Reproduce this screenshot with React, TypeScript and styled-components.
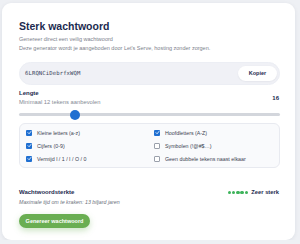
import React from "react";
import styled, { createGlobalStyle } from "styled-components";

const GlobalStyle = createGlobalStyle`
  html, body { margin: 0; padding: 0; }
  body {
    background: #eef0f4;
    font-family: "Liberation Sans", Arial, sans-serif;
    -webkit-font-smoothing: antialiased;
  }
`;

const Card = styled.div`
  box-sizing: border-box;
  margin: 3px 0 0 2px;
  width: 293px;
  height: 237px;
  padding: 17px 15px 12px 17px;
  background: #ffffff;
  border-radius: 9px;
  box-shadow: 0 1px 4px rgba(30, 40, 70, 0.08);
  display: flex;
  flex-direction: column;
`;

const Title = styled.h1`
  margin: 0;
  font-size: 10.5px;
  line-height: 13px;
  font-weight: 700;
  color: #1c2b4f;
`;

const Sub = styled.p`
  margin: 1.5px 0 0;
  font-size: 5.5px;
  line-height: 9px;
  color: #7c818c;
`;

const PasswordBox = styled.div`
  margin-top: 9px;
  height: 24px;
  box-sizing: border-box;
  border-radius: 12px;
  background: #f0f1f6;
  border: 1px solid #eceef4;
  display: flex;
  align-items: center;
  justify-content: space-between;
  padding: 0 2px 0 5px;
`;

const PasswordText = styled.span`
  font-family: "DejaVu Sans Mono", "Liberation Mono", monospace;
  font-size: 5.6px;
  color: #3a4560;
  letter-spacing: 0.1px;
`;

const CopyButton = styled.button`
  height: 15px;
  width: 39px;
  padding: 0;
  border: none;
  border-radius: 8px;
  background: #ffffff;
  box-shadow: 0 0.5px 1.5px rgba(30, 40, 70, 0.08);
  font-family: inherit;
  font-size: 5.5px;
  font-weight: 700;
  color: #1c2b4f;
`;

const LengthHeader = styled.div`
  margin-top: 4px;
  display: flex;
  align-items: center;
  justify-content: space-between;
`;

const Label = styled.div`
  font-size: 6px;
  line-height: 8px;
  font-weight: 700;
  color: #1c2b4f;
`;

const Hint = styled.div<{ $italic?: boolean }>`
  font-size: ${(p) => (p.$italic ? "5.3px" : "5.8px")};
  line-height: ${(p) => (p.$italic ? "9px" : "10px")};
  font-style: ${(p) => (p.$italic ? "italic" : "normal")};
  color: ${(p) => (p.$italic ? "#6d727d" : "#868b95")};
  margin-top: ${(p) => (p.$italic ? "1.5px" : "0")};
`;

const Value = styled.div`
  font-size: 6px;
  font-weight: 700;
  color: #1c2b4f;
  padding-right: 1px;
`;

const SliderWrap = styled.div`
  position: relative;
  margin-top: 3px;
  height: 10px;
  display: flex;
  align-items: center;
`;

const Track = styled.div`
  width: 100%;
  height: 3.5px;
  border-radius: 2px;
  background: #d3d6dc;
`;

const Thumb = styled.div`
  position: absolute;
  top: 0;
  width: 10px;
  height: 10px;
  border-radius: 50%;
  background: #1f6fd1;
`;

const Options = styled.div`
  margin-top: 4px;
  box-sizing: border-box;
  border: 1px solid #e8eaf0;
  background: #f9fafc;
  border-radius: 6px;
  padding: 2px 6px;
  display: grid;
  grid-template-columns: 128px 1fr;
  grid-auto-rows: 13px;
`;

const Option = styled.label`
  display: flex;
  align-items: center;
  gap: 5px;
  font-size: 5.3px;
  color: #3b4252;
`;

const Box = styled.span<{ $checked: boolean }>`
  box-sizing: border-box;
  width: 6px;
  height: 6px;
  border-radius: 1px;
  flex: none;
  display: flex;
  align-items: center;
  justify-content: center;
  background: ${(p) => (p.$checked ? "#1f6fd1" : "#ffffff")};
  border: ${(p) => (p.$checked ? "none" : "0.8px solid #9aa0ab")};
`;

const StrengthRow = styled.div`
  margin-top: 20px;
  display: flex;
  justify-content: space-between;
  align-items: flex-start;
`;

const Meter = styled.div`
  display: flex;
  align-items: center;
  height: 8px;
  gap: 3px;
`;

const Dots = styled.div`
  display: flex;
  gap: 0.8px;
`;

const Dot = styled.span`
  width: 3.5px;
  height: 3.5px;
  border-radius: 50%;
  background: #3db35a;
`;

const StrengthText = styled.span`
  font-size: 5.8px;
  font-weight: 700;
  color: #1c2b4f;
  padding-right: 1px;
`;

const GenerateButton = styled.button`
  margin-top: 7px;
  align-self: flex-start;
  height: 14.5px;
  width: 71px;
  padding: 0;
  border: none;
  border-radius: 8px;
  background: #6aae52;
  box-shadow: 0 2.5px 6px rgba(106, 174, 82, 0.35);
  font-family: inherit;
  font-size: 5.5px;
  font-weight: 700;
  color: #ffffff;
`;

const options = [
  { label: "Kleine letters (a-z)", checked: true },
  { label: "Hoofdletters (A-Z)", checked: true },
  { label: "Cijfers (0-9)", checked: true },
  { label: "Symbolen (!@#$…)", checked: false },
  { label: "Vermijd l / 1 / I / O / 0", checked: true },
  { label: "Geen dubbele tekens naast elkaar", checked: false },
];

const Check = () => (
  <svg width="5" height="5" viewBox="0 0 10 10">
    <path d="M2 5.3 L4.2 7.5 L8 2.8" fill="none" stroke="#fff" strokeWidth="1.6" strokeLinecap="round" strokeLinejoin="round" />
  </svg>
);

export default function App() {
  const min = 4;
  const max = 60;
  const value = 16;
  const trackWidth = 261;
  const thumbLeft = ((value - min) / (max - min)) * trackWidth - 5;

  return (
    <>
      <GlobalStyle />
      <Card>
        <Title>Sterk wachtwoord</Title>
        <Sub>
          Genereer direct een veilig wachtwoord
          <br />
          Deze generator wordt je aangeboden door Let's Serve, hosting zonder zorgen.
        </Sub>
        <PasswordBox>
          <PasswordText>6LRQNCiDebrfxWQM</PasswordText>
          <CopyButton>Kopier</CopyButton>
        </PasswordBox>
        <LengthHeader>
          <div>
            <Label>Lengte</Label>
            <Hint>Minimaal 12 tekens aanbevolen</Hint>
          </div>
          <Value>{value}</Value>
        </LengthHeader>
        <SliderWrap>
          <Track />
          <Thumb style={{ left: thumbLeft }} />
        </SliderWrap>
        <Options>
          {options.map((o) => (
            <Option key={o.label}>
              <Box $checked={o.checked}>{o.checked && <Check />}</Box>
              {o.label}
            </Option>
          ))}
        </Options>
        <StrengthRow>
          <div>
            <Label>Wachtwoordsterkte</Label>
            <Hint $italic>Maximale tijd om te kraken: 13 biljard jaren</Hint>
          </div>
          <Meter>
            <Dots>
              {[0, 1, 2, 3, 4].map((i) => (
                <Dot key={i} />
              ))}
            </Dots>
            <StrengthText>Zeer sterk</StrengthText>
          </Meter>
        </StrengthRow>
        <GenerateButton>Genereer wachtwoord</GenerateButton>
      </Card>
    </>
  );
}
